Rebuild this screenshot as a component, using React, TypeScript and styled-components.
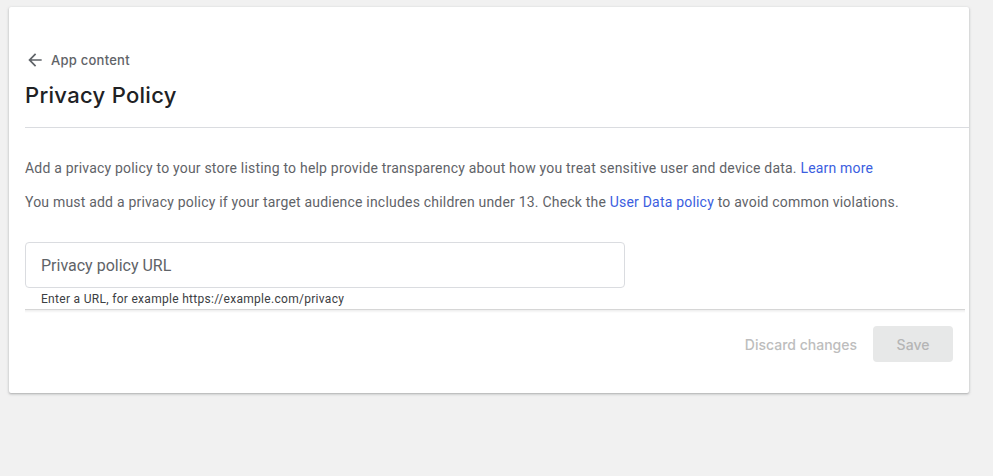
import React from "react";
import styled, { createGlobalStyle } from "styled-components";

const GlobalStyle = createGlobalStyle`
  body {
    margin: 0;
    background: #f1f1f1;
    font-family: Roboto, "Liberation Sans", sans-serif;
  }
`;

const Page = styled.div`
  padding: 7px 24px 0 9px;
  height: 476px;
  box-sizing: border-box;
`;

const Card = styled.div`
  width: 960px;
  height: 386px;
  background: #fff;
  border-radius: 2px;
  box-shadow: 0 1px 2px rgba(60, 64, 67, 0.3), 0 1px 3px 1px rgba(60, 64, 67, 0.08);
  display: flex;
  flex-direction: column;
`;

const Header = styled.div`
  margin-left: 16px;
  padding-top: 43px;
  height: 77px;
  border-bottom: 1px solid #dadce0;
`;

const BackLink = styled.a`
  display: flex;
  align-items: center;
  gap: 6px;
  height: 20px;
  color: #5f6368;
  font-family: Inter, "Open Sans", sans-serif;
  font-size: 13px;
  font-weight: 500;
  letter-spacing: 0.25px;
  text-decoration: none;
  cursor: pointer;
`;

const Title = styled.h1`
  margin: 11px 0 0;
  font-family: Inter, "Open Sans", sans-serif;
  font-size: 22px;
  font-weight: 500;
  line-height: 28px;
  color: #202124;
  letter-spacing: 0.3px;
`;

const Body = styled.div`
  padding: 30px 16px 0;
  flex: 1;
`;

const Text = styled.p`
  margin: 0 0 14px;
  font-size: 14px;
  line-height: 20px;
  letter-spacing: 0.2px;
  color: #5f6368;
`;

const Link = styled.a`
  color: #3b5ee0;
  text-decoration: none;
  cursor: pointer;
`;

const Field = styled.div`
  margin-top: 30px;
  width: 600px;
`;

const Input = styled.input`
  width: 100%;
  height: 46px;
  box-sizing: border-box;
  border: 1px solid #dadce0;
  border-radius: 4px;
  padding: 0 15px;
  font-family: Roboto, "Liberation Sans", sans-serif;
  font-size: 16px;
  color: #202124;
  outline: none;
  &::placeholder {
    color: #5f6368;
  }
`;

const Helper = styled.div`
  padding-left: 16px;
  margin-top: 4px;
  font-size: 12px;
  line-height: 14px;
  letter-spacing: 0.3px;
  color: #3c4043;
`;

const Footer = styled.div`
  margin: 0 4px 0 16px;
  height: 84px;
  border-top: 1px solid #d6d6d6;
  background: linear-gradient(rgba(0, 0, 0, 0.07), rgba(0, 0, 0, 0) 3px);
  display: flex;
  justify-content: flex-end;
  align-items: flex-start;
  padding-top: 16px;
  padding-right: 12px;
  gap: 16px;
  box-sizing: border-box;
`;

const TextButton = styled.button`
  height: 36px;
  border: none;
  background: none;
  padding: 0;
  font-family: Inter, "Open Sans", sans-serif;
  font-size: 14px;
  font-weight: 500;
  color: #bdbdbd;
`;

const FilledButton = styled.button`
  width: 80px;
  height: 36px;
  border: none;
  border-radius: 4px;
  background: #e7e8e8;
  font-family: Inter, "Open Sans", sans-serif;
  font-size: 14px;
  font-weight: 500;
  color: #b5b5b5;
`;

const ArrowBack = () => (
  <svg width="20" height="20" viewBox="0 0 24 24" fill="#5f6368">
    <path d="M20 11H7.83l5.59-5.59L12 4l-8 8 8 8 1.41-1.41L7.83 13H20v-2z" />
  </svg>
);

const App = () => {
  return (
    <>
      <GlobalStyle />
      <Page>
        <Card>
          <Header>
            <BackLink>
              <ArrowBack />
              App content
            </BackLink>
            <Title>Privacy Policy</Title>
          </Header>
          <Body>
            <Text>
              Add a privacy policy to your store listing to help provide
              transparency about how you treat sensitive user and device data.{" "}
              <Link>Learn more</Link>
            </Text>
            <Text>
              You must add a privacy policy if your target audience includes
              children under 13. Check the <Link>User Data policy</Link> to
              avoid common violations.
            </Text>
            <Field>
              <Input placeholder="Privacy policy URL" />
              <Helper>Enter a URL, for example https://example.com/privacy</Helper>
            </Field>
          </Body>
          <Footer>
            <TextButton>Discard changes</TextButton>
            <FilledButton>Save</FilledButton>
          </Footer>
        </Card>
      </Page>
    </>
  );
};

export default App;
